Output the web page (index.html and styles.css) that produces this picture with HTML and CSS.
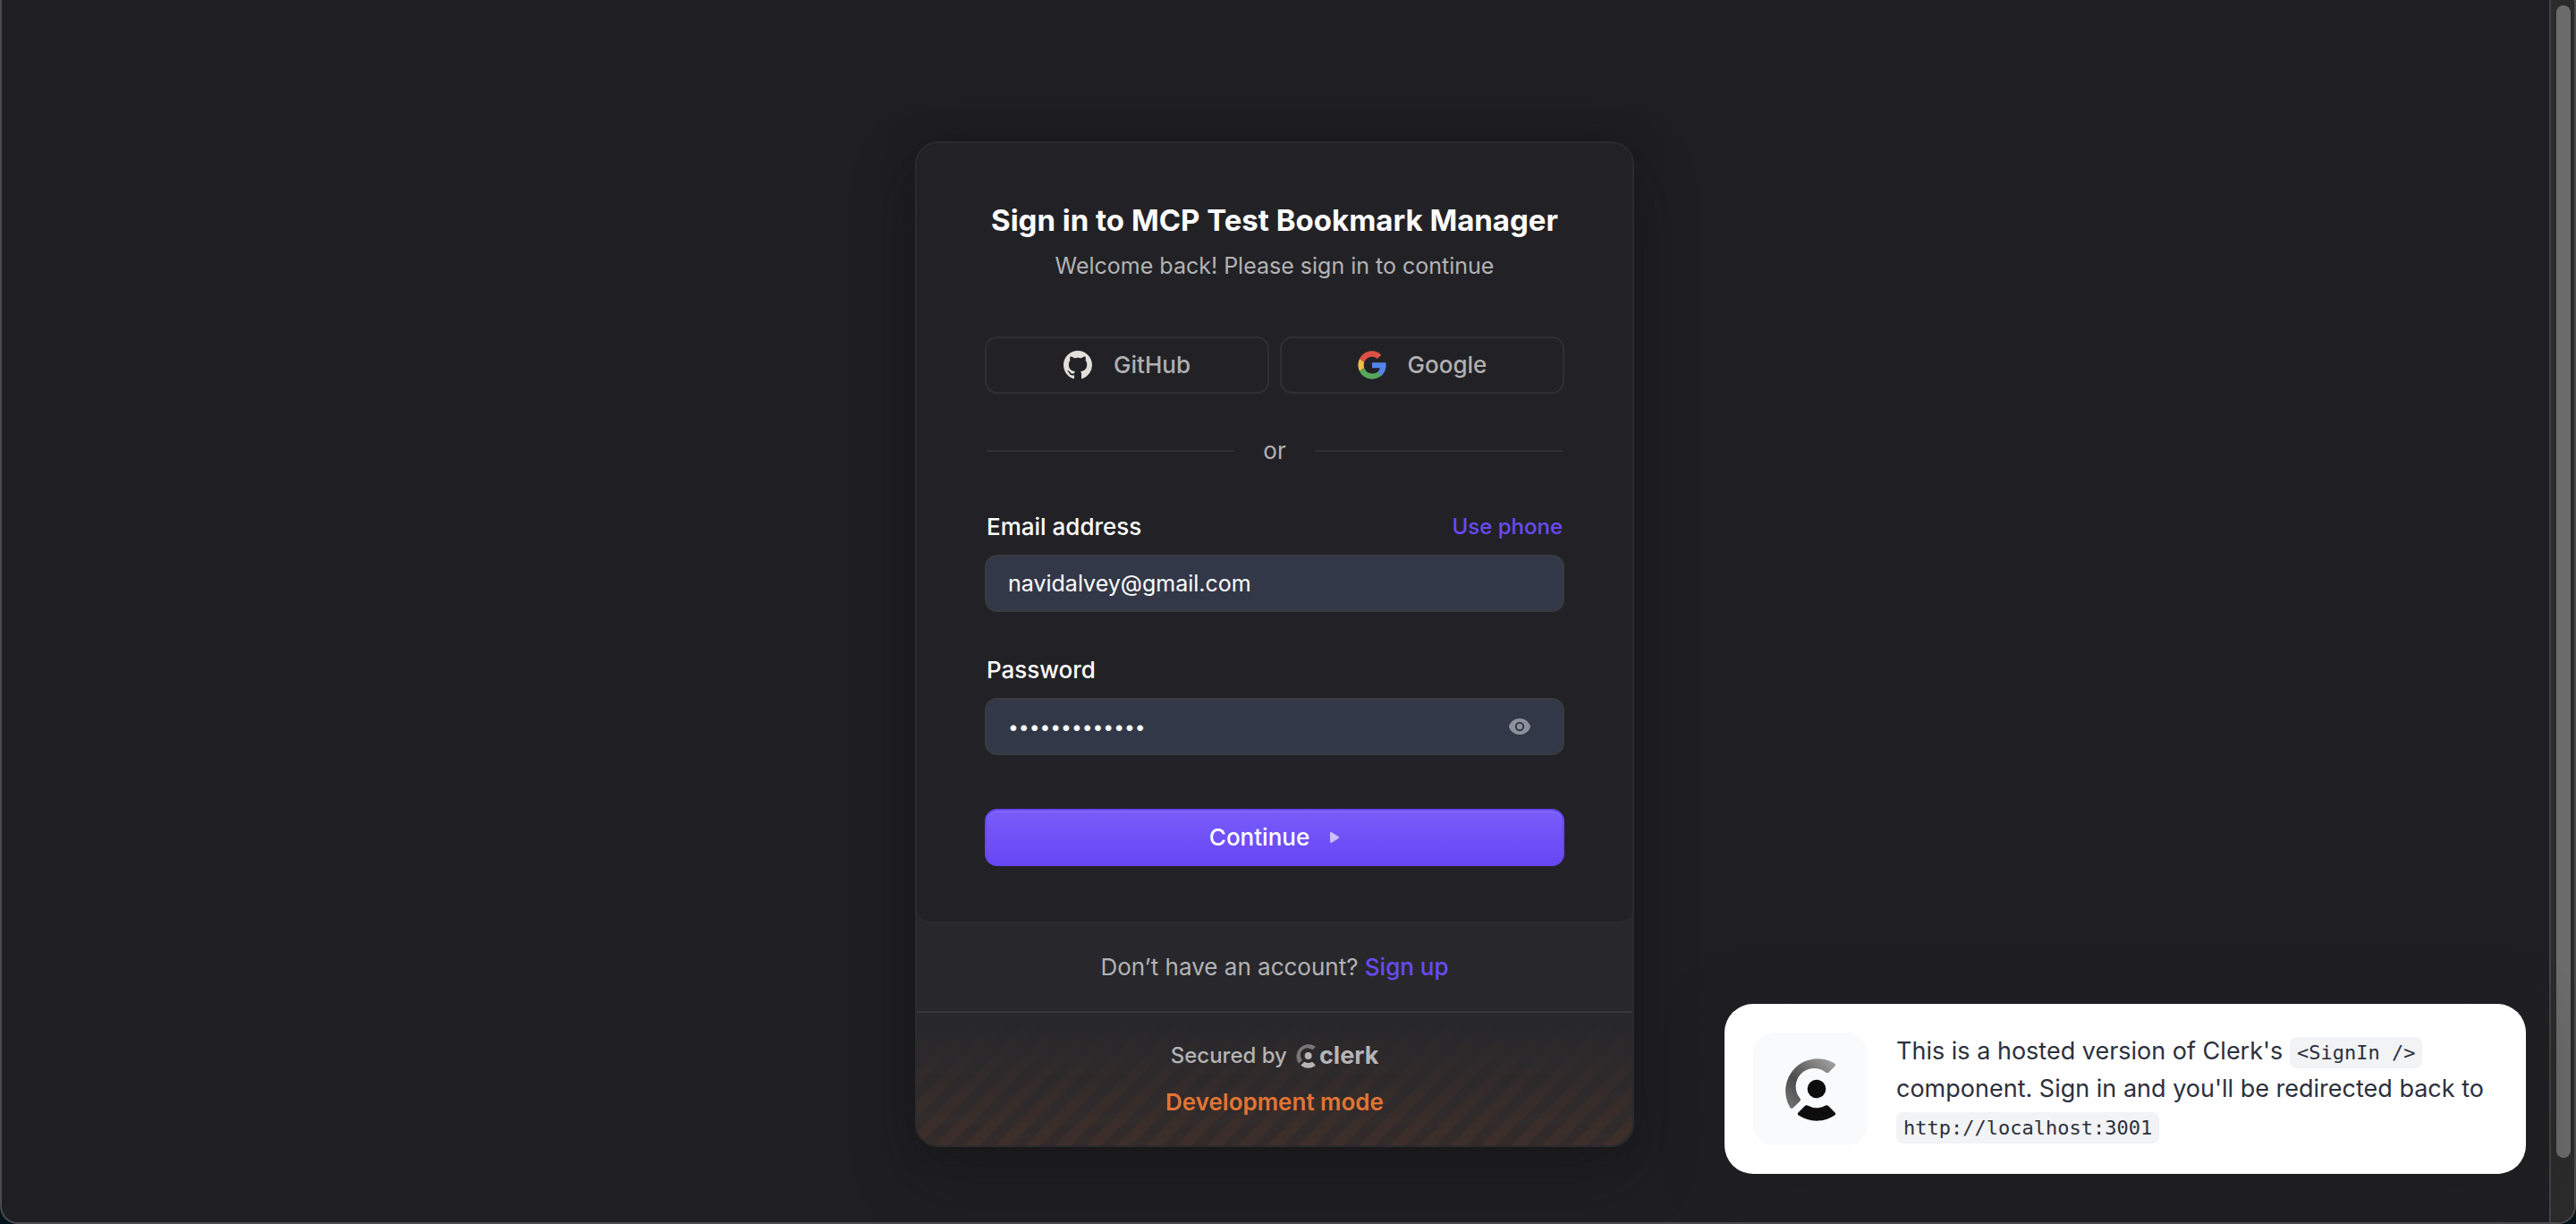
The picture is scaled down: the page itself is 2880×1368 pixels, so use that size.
FILE: index.html
```
<!DOCTYPE html>
<html lang="en">
<head>
<meta charset="utf-8">
<meta name="viewport" content="width=device-width, initial-scale=1">
<title>Sign in</title>
<link rel="stylesheet" href="styles.css">
</head>
<body>
<div class="window">
  <main class="page">
    <section class="card">
      <div class="card-body">
        <header class="header">
          <h1 class="title">Sign in to MCP Test Bookmark Manager</h1>
          <p class="subtitle">Welcome back! Please sign in to continue</p>
        </header>
        <div class="social">
          <button type="button" class="social-button">
            <svg class="social-icon" viewBox="0 0 16 16" aria-hidden="true"><path fill="#e3dfd9" fill-rule="evenodd" d="M8 0C3.58 0 0 3.58 0 8c0 3.54 2.29 6.53 5.47 7.59.4.07.55-.17.55-.38 0-.19-.01-.82-.01-1.49-2.01.37-2.53-.49-2.69-.94-.09-.23-.48-.94-.82-1.13-.28-.15-.68-.52-.01-.53.63-.01 1.08.58 1.23.82.72 1.21 1.87.87 2.33.66.07-.52.28-.87.51-1.07-1.78-.2-3.64-.89-3.64-3.95 0-.87.31-1.59.82-2.15-.08-.2-.36-1.02.08-2.12 0 0 .67-.21 2.2.82.64-.18 1.32-.27 2-.27s1.36.09 2 .27c1.53-1.04 2.2-.82 2.2-.82.44 1.1.16 1.92.08 2.12.51.56.82 1.27.82 2.15 0 3.07-1.87 3.75-3.65 3.95.29.25.54.73.54 1.48 0 1.07-.01 1.93-.01 2.2 0 .21.15.46.55.38A8.01 8.01 0 0 0 16 8c0-4.42-3.58-8-8-8z"/></svg>
            <span>GitHub</span>
          </button>
          <button type="button" class="social-button">
            <svg class="social-icon" viewBox="2 2 44 44" aria-hidden="true"><path fill="#dd5144" d="M24 11.200c3.200 0 5.900 1.100 8.100 3.200l6-6C34.500 4.700 29.700 2.500 24 2.500c-8.500 0-15.700 4.800-19.200 11.900l7.100 5.500C13.600 14.900 18.300 11.200 24 11.200z"/><path fill="#5384ec" d="M45.500 24.500c0-1.600-.2-3-.4-4.400H24v8.500h12.100c-.5 2.800-2.100 5.100-4.500 6.700l6.900 5.400c4.400-4.100 7-9.800 7-16.200z"/><path fill="#f2bd42" d="M11.900 28.100a13.300 13.300 0 0 1 0-8.200l-7.100-5.500a21.500 21.500 0 0 0 0 19.200z"/><path fill="#58a55c" d="M24 45.500c5.800 0 10.700-1.900 14.500-5.200l-6.900-5.400c-1.900 1.300-4.400 2.100-7.600 2.100-5.700 0-10.400-3.800-12.100-8.900l-7.100 5.500C8.300 40.700 15.500 45.500 24 45.500z"/></svg>
            <span>Google</span>
          </button>
        </div>
        <div class="divider"><span>or</span></div>
        <form class="form">
          <div class="field">
            <div class="label-row">
              <label for="email">Email address</label>
              <a class="link link-small" href="#phone">Use phone</a>
            </div>
            <input class="input" id="email" type="email" value="navidalvey@gmail.com">
          </div>
          <div class="field">
            <div class="label-row"><label for="password">Password</label></div>
            <div class="password">
              <input class="input input-dots" id="password" type="password" value="bookmarks-123">
              <button type="button" class="reveal" aria-label="Show password">
                <svg viewBox="0 0 24 18" aria-hidden="true"><path fill="#8c919b" fill-rule="evenodd" d="M12 0C6.500 0 2.200 3.200.3 7.800a3 3 0 0 0 0 2.400C2.200 14.800 6.500 18 12 18s9.800-3.200 11.700-7.800a3 3 0 0 0 0-2.400C21.800 3.200 17.500 0 12 0zm0 3.800a5.200 5.200 0 1 1 0 10.400 5.200 5.200 0 0 1 0-10.400z"/><circle cx="12" cy="9" r="3.200" fill="#8c919b"/></svg>
              </button>
            </div>
          </div>
          <button type="submit" class="submit">
            <span>Continue</span>
            <svg viewBox="0 0 12 14" aria-hidden="true"><path fill="#cabfff" d="M1 2.200C1 1.200 2 .7 2.900 1.200l7.600 4.700c.8.500.8 1.700 0 2.200l-7.600 4.700C2 13.300 1 12.800 1 11.800z"/></svg>
          </button>
        </form>
      </div>
      <p class="signup"><span>Don’t have an account?</span> <a class="link" href="#sign-up">Sign up</a></p>
      <footer class="footer">
        <div class="secured">
          <span>Secured by</span>
          <a class="brand" href="#clerk">
            <svg viewBox="0 0 58 72" aria-hidden="true"><path fill="#777679" d="M56 7.500A36 36 0 0 0 6.500 57q1.500 2 3.200.3l7.600-7.600q1.300-1.300.3-3A20.500 20.500 0 0 1 46.500 17.800q1.700 1 3-.3l7-7q1.500-1.600-.5-3z"/><circle cx="36" cy="36" r="10.500" fill="#b6b5b6"/><path fill="#b6b5b6" d="M15.500 62.500q-1.600 1.600.4 3a36 36 0 0 0 40.200 0q2-1.400.4-3l-7.400-7.600q-1.300-1.300-3-.4a21 21 0 0 1-20.200 0q-1.700-.9-3 .4z"/></svg>
            <span class="wordmark">clerk</span>
          </a>
        </div>
        <p class="mode">Development mode</p>
      </footer>
    </section>
    <aside class="notice">
      <div class="tile">
        <svg viewBox="0 0 58 72" aria-hidden="true"><defs><linearGradient id="arc" x1="1" y1="0" x2="0" y2="1"><stop offset="0" stop-color="#a8a8a8"/><stop offset=".62" stop-color="#4c4c4c"/><stop offset="1" stop-color="#777"/></linearGradient></defs><path fill="url(#arc)" d="M56 7.500A36 36 0 0 0 6.500 57q1.500 2 3.200.3l7.600-7.600q1.300-1.300.3-3A20.500 20.500 0 0 1 46.500 17.800q1.700 1 3-.3l7-7q1.500-1.600-.5-3z"/><circle cx="36" cy="36" r="10.300" fill="#0d0d0d"/><path fill="#0d0d0d" d="M15.500 62.500q-1.600 1.600.4 3a36 36 0 0 0 40.200 0q2-1.400.4-3l-7.400-7.600q-1.300-1.300-3-.4a21 21 0 0 1-20.200 0q-1.700-.9-3 .4z"/></svg>
      </div>
      <p class="notice-text">This is a hosted version of Clerk's <code>&lt;SignIn /&gt;</code> component. Sign in and you'll be redirected back to <code>http://localhost:3001</code></p>
    </aside>
  </main>
  <div class="scrollbar" aria-hidden="true"><div class="thumb"></div></div>
</div>
</body>
</html>
```
FILE: styles.css
```
* { box-sizing: border-box; }

body {
  margin: 0;
  background: #05131c;
  font-family: Inter, "Liberation Sans", sans-serif;
  font-size: 26px;
  line-height: 32px;
  color: #b3b3b5;
}

h1, p { margin: 0; }
button, input { font: inherit; }
button { cursor: pointer; }
svg { display: block; }

.window {
  display: flex;
  min-height: 100vh;
  border: 2px solid #4b4b4d;
  border-top: 0;
  border-radius: 0 0 20px 20px;
  background: #1f1f23;
  overflow: hidden;
}

.page {
  position: relative;
  flex: 1;
  padding: 158px 26px 84px 24px;
}

.scrollbar {
  display: flex;
  width: 28px;
  padding: 6px 4px 72px 6px;
  border-left: 2px solid #434345;
  background: #2b2b2b;
}

.thumb {
  width: 16px;
  border-radius: 8px;
  background: #6b6b6b;
}

.card {
  max-width: 804px;
  margin: 0 auto;
  border: 2px solid #2b2b2e;
  border-radius: 26px;
  background: #28282c;
  box-shadow: 0 30px 70px -10px rgba(20, 20, 20, .5), 0 0 30px rgba(24, 24, 24, .5);
}

.card-body {
  padding: 62px 76px;
  border-bottom: 2px solid #2c2c30;
  border-radius: 24px 24px 16px 16px;
  background: #222226;
}

.header {
  display: grid;
  gap: 8px;
  margin-bottom: 60px;
  text-align: center;
}

.title {
  font-size: 33px;
  line-height: 48px;
  font-weight: 700;
  color: #fff;
}

.subtitle {
  font-size: 25px;
  line-height: 38px;
}

.social {
  display: flex;
  gap: 12px;
}

.social-button {
  display: flex;
  flex: 1;
  align-items: center;
  justify-content: center;
  gap: 24px;
  height: 64px;
  border: 2px solid #303034;
  border-radius: 14px;
  background: transparent;
  color: #b0b0b2;
  font-weight: 500;
}

.social-icon {
  width: 32px;
  height: 32px;
}

.divider {
  display: flex;
  align-items: center;
  gap: 32px;
  margin: 48px 2px 53px;
}

.divider::before,
.divider::after {
  content: "";
  flex: 1;
  height: 2px;
  background: #303035;
}

.form {
  display: grid;
  gap: 49px;
}

.field {
  display: grid;
  gap: 15px;
}

.label-row {
  display: flex;
  justify-content: space-between;
  padding: 0 2px;
  font-weight: 500;
  color: #fff;
}

.link {
  color: #6a4af8;
  font-weight: 500;
  text-decoration: none;
}

.link-small { font-size: 24px; }

.input {
  width: 100%;
  height: 64px;
  padding: 0 24px;
  border: 2px solid #3a3b40;
  border-radius: 14px;
  outline: 0;
  background: #333848;
  color: #fff;
  font-size: 25px;
}

.input-dots { font-size: 21px; }

.password { position: relative; }

.reveal {
  position: absolute;
  top: 12px;
  right: 30px;
  display: grid;
  place-items: center;
  width: 40px;
  height: 40px;
  padding: 0;
  border: 0;
  background: none;
}

.reveal svg {
  width: 24px;
  height: 18px;
}

.submit {
  display: flex;
  align-items: center;
  justify-content: center;
  gap: 22px;
  height: 64px;
  margin-top: 11px;
  border: 2px solid #6747f5;
  border-radius: 14px;
  background: linear-gradient(#785cf9, #6747f5);
  box-shadow: inset 0 2px 0 rgba(255, 255, 255, .07);
  color: #fff;
  font-weight: 500;
}

.submit svg {
  width: 12px;
  height: 14px;
}

.signup {
  padding: 33px 24px;
  text-align: center;
}

.footer {
  position: relative;
  display: grid;
  justify-items: center;
  gap: 20px;
  padding: 32px;
  border-top: 2px solid #37373c;
  border-radius: 0 0 24px 24px;
  overflow: hidden;
}

.footer::before {
  content: "";
  position: absolute;
  inset: 0;
  background: repeating-linear-gradient(-45deg, rgba(243, 107, 22, .06) 0 12px, rgba(243, 107, 22, .11) 12px 24px);
  mask-image: linear-gradient(transparent 5%, #000);
}

.secured {
  position: relative;
  display: flex;
  align-items: center;
  gap: 10px;
  font-size: 24px;
  font-weight: 500;
}

.brand {
  display: flex;
  align-items: center;
  gap: 4px;
  color: #b6b5b6;
  text-decoration: none;
}

.brand svg {
  width: 22px;
  height: 28px;
}

.wordmark {
  font-size: 27px;
  font-weight: 700;
}

.mode {
  position: relative;
  color: #e27534;
  font-weight: 600;
}

.notice {
  position: absolute;
  right: 26px;
  bottom: 54px;
  display: flex;
  align-items: center;
  gap: 32px;
  width: 896px;
  padding: 32px;
  border-radius: 32px;
  background: #fff;
  box-shadow: 0 8px 60px rgba(30, 30, 30, .8);
}

.tile {
  display: grid;
  flex: none;
  place-items: center;
  width: 128px;
  height: 126px;
  border-radius: 24px;
  background: #f9fafc;
}

.tile svg {
  width: 58px;
  height: 72px;
}

.notice-text {
  font-size: 27px;
  line-height: 42px;
  color: #2c303d;
}

.notice-text code {
  padding: 5px 8px;
  border-radius: 8px;
  background: #f2f3f5;
  font-family: "DejaVu Sans Mono", monospace;
  font-size: 22px;
  line-height: 24px;
}
```
